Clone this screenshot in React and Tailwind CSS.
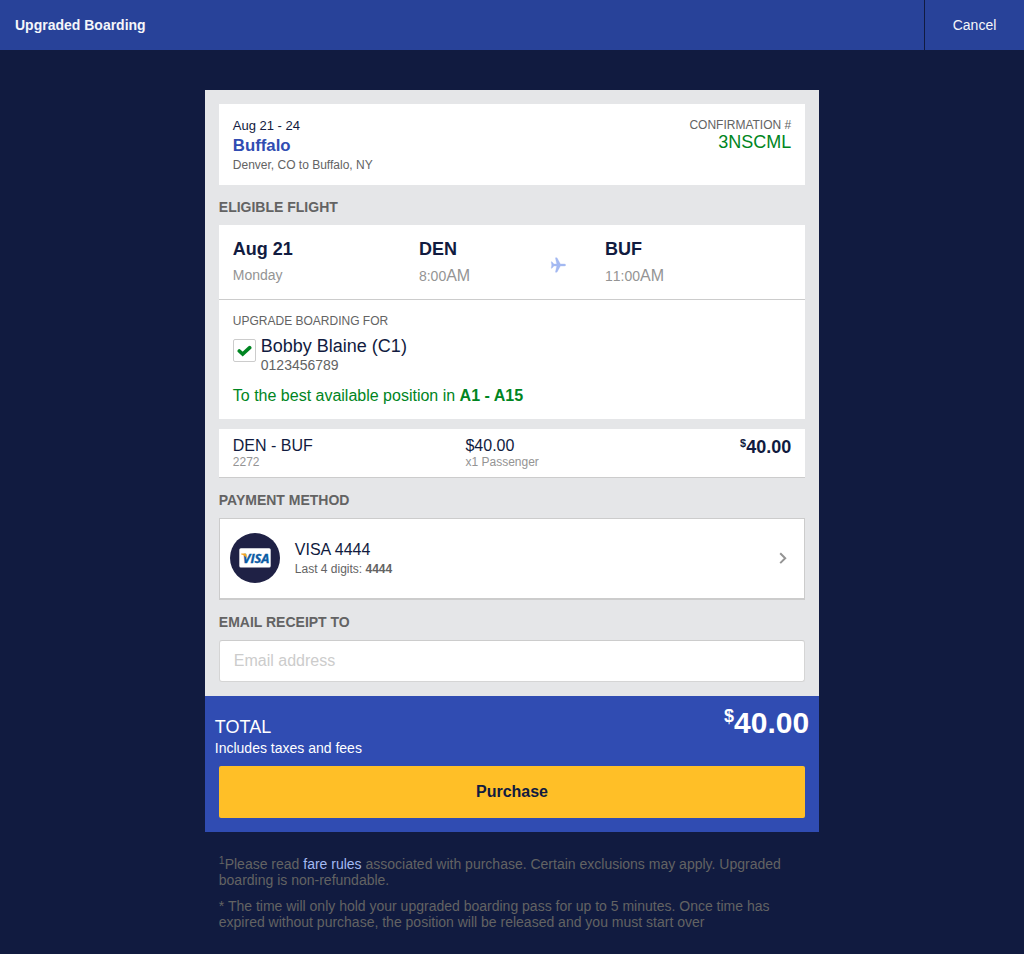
import React from "react";

function SectionTitle({ children }) {
  return (
    <h2 className="flex h-10 items-center pt-1 text-sm font-bold uppercase leading-4 text-[#636363]">
      {children}
    </h2>
  );
}

function FlightTime({ time }) {
  return (
    <div className="mt-2 flex items-baseline text-base leading-[18px] text-[#949494]">
      <span className="text-sm leading-[18px] [font-kerning:none]">{time}</span>
      <span>AM</span>
    </div>
  );
}

function PlaneIcon() {
  return (
    <svg className="h-4 w-4" viewBox="0 0 16 16" fill="#a3b9f2" stroke="#a3b9f2" strokeWidth="0.3">
      <path d="M1.2 4.8H2L3.9 7L6.7 6.9L5.4 0.8H7L10.4 6.9H14C15 6.9 15.8 7.4 15.8 8S15 9.1 14 9.1H10.4L7 15.2H5.4L6.7 9.1L3.9 9L2 11.2H1.2L1.7 8Z" />
    </svg>
  );
}

function VisaBadge() {
  return (
    <svg className="h-[50px] w-[50px] shrink-0" viewBox="0 0 50 50">
      <circle cx="25" cy="25" r="25" fill="#1f2145" />
      <rect x="9.3" y="15.2" width="31.4" height="19.4" rx="1.6" fill="#fff" />
      <text
        x="12.8"
        y="29.6"
        textLength="26.6"
        lengthAdjust="spacingAndGlyphs"
        fontFamily="Open Sans, Noto Sans, sans-serif"
        fontWeight="700"
        fontStyle="italic"
        fontSize="12"
        fill="#0b5ba4"
        stroke="#0b5ba4"
        strokeWidth="0.35"
      >
        VISA
      </text>
      <path d="M11.2 20.6H15C15.9 20.6 16.3 21 16.4 21.7L17 25.2C15.7 23.4 13.8 22.2 11.2 21.5Z" fill="#f5a623" />
    </svg>
  );
}

export default function App() {
  return (
    <div className="min-h-[954px] bg-[#111b40] font-['Liberation_Sans',Arial,sans-serif] text-[#111b40]">
      <header className="flex h-[50px] items-center justify-between bg-[#284299] text-sm text-[#f5f6fa]">
        <h1 className="pl-[15px] font-bold">Upgraded Boarding</h1>
        <button className="h-full w-[100px] border-l border-[#111b40]">Cancel</button>
      </header>

      <main className="mx-auto mt-10 w-[60%]">
        <div className="bg-[#e5e6e8] p-[14px]">
          <section className="flex h-[81px] justify-between bg-white p-[14px]">
            <div>
              <div className="text-[13px] leading-4">Aug 21 - 24</div>
              <div className="text-[16.8px] font-bold leading-[23px] text-[#304cb2]">Buffalo</div>
              <div className="text-xs leading-4 text-[#636363]">Denver, CO to Buffalo, NY</div>
            </div>
            <div className="text-right">
              <div className="text-xs leading-[14px] text-[#636363]">CONFIRMATION #</div>
              <div className="text-lg leading-5 text-[#008522]">3NSCML</div>
            </div>
          </section>

          <SectionTitle>Eligible flight</SectionTitle>

          <section className="bg-white">
            <div className="grid h-[75px] grid-cols-3 border-b border-[#ccc] px-[14px] pt-[14px]">
              <div>
                <div className="text-lg font-bold leading-5">Aug 21</div>
                <div className="mt-2 text-sm leading-4 text-[#949494]">Monday</div>
              </div>
              <div className="flex justify-between">
                <div>
                  <div className="text-lg font-bold leading-5">DEN</div>
                  <FlightTime time="8:00" />
                </div>
                <div className="mr-[39px] mt-[18px]">
                  <PlaneIcon />
                </div>
              </div>
              <div>
                <div className="text-lg font-bold leading-5">BUF</div>
                <FlightTime time="11:00" />
              </div>
            </div>
            <div className="h-[119px] px-[14px] pt-[14px]">
              <div className="text-xs leading-[14px] text-[#636363]">UPGRADE BOARDING FOR</div>
              <div className="mt-2 flex gap-[5px]">
                <div className="mt-[3px] flex h-[23px] w-[23px] items-center justify-center rounded-[2px] border border-[#ccc]">
                  <svg
                    className="h-[15px] w-[15px]"
                    viewBox="0 0 15 15"
                    fill="none"
                    stroke="#008522"
                    strokeWidth="3.6"
                    strokeLinecap="round"
                  >
                    <path d="M2.3 8L5.7 11.1L12.7 4.7" />
                  </svg>
                </div>
                <div>
                  <div className="text-lg leading-5">Bobby Blaine (C1)</div>
                  <div className="text-sm leading-[18px] text-[#636363]">0123456789</div>
                </div>
              </div>
              <div className="mt-[13px] text-base leading-[18px] text-[#008522]">
                To the best available position in <b>A1 - A15</b>
              </div>
            </div>
          </section>

          <section className="mt-[10px] grid h-[49px] grid-cols-[5fr_4fr_3fr] border-b border-[#ccc] bg-white px-[14px] pt-2">
            <div>
              <div className="text-base leading-[18px]">DEN - BUF</div>
              <div className="text-xs leading-[14px] text-[#949494]">2272</div>
            </div>
            <div>
              <div className="text-base leading-[18px]">$40.00</div>
              <div className="text-xs leading-[14px] text-[#949494]">x1 Passenger</div>
            </div>
            <div className="flex items-start justify-end font-bold">
              <span className="text-[10.8px] leading-[13px]">$</span>
              <span className="text-lg leading-5">40.00</span>
            </div>
          </section>

          <SectionTitle>Payment method</SectionTitle>

          <section className="flex h-[82px] items-center border border-b-2 border-[#ccc] bg-white pb-px pl-[10px] pr-[16px]">
            <VisaBadge />
            <div className="ml-[15px] grow">
              <div className="mt-[2px] text-base leading-[18px]">VISA 4444</div>
              <div className="mt-[2px] text-xs leading-4 text-[#636363]">
                Last 4 digits: <b>4444</b>
              </div>
            </div>
            <svg className="h-3 w-[10px]" viewBox="0 0 10 12" fill="none" stroke="#949494" strokeWidth="2">
              <path d="M2.2 1.3L7.2 6.2L2.2 11.1" />
            </svg>
          </section>

          <SectionTitle>Email receipt to</SectionTitle>

          <input
            className="block h-[42px] w-full rounded-[3px] border border-[#d5d5d5] border-t-[#ccc] bg-white px-[14px] text-base placeholder:text-[#ccc]"
            placeholder="Email address"
          />
        </div>

        <section className="h-[136px] bg-[#304cb2] text-white">
          <div className="flex h-[70px] justify-between px-[10px] pt-[10px]">
            <div className="pt-[10px]">
              <div className="text-lg leading-[22px]">TOTAL</div>
              <div className="text-sm leading-5">Includes taxes and fees</div>
            </div>
            <div className="flex items-start font-bold">
              <span className="text-lg leading-5">$</span>
              <span className="text-[30px] leading-[34px]">40.00</span>
            </div>
          </div>
          <div className="px-[14px]">
            <button className="h-[52px] w-full rounded-[2px] bg-[#ffbf27] text-base font-bold text-[#111b40]">
              Purchase
            </button>
          </div>
        </section>

        <footer className="px-[14px] pt-6 text-sm leading-4 text-[#636363]">
          <p>
            <sup className="top-[-5px] text-[10.5px] leading-none">1</sup>Please read{" "}
            <a className="text-[#a3b9f2]">fare rules</a> associated with purchase. Certain exclusions may apply. Upgraded boarding is non-refundable.
          </p>
          <p className="mt-[10px]">
            * The time will only hold your upgraded boarding pass for up to 5 minutes. Once time has expired without purchase, the position will be released and you must start over
          </p>
        </footer>
      </main>
    </div>
  );
}
